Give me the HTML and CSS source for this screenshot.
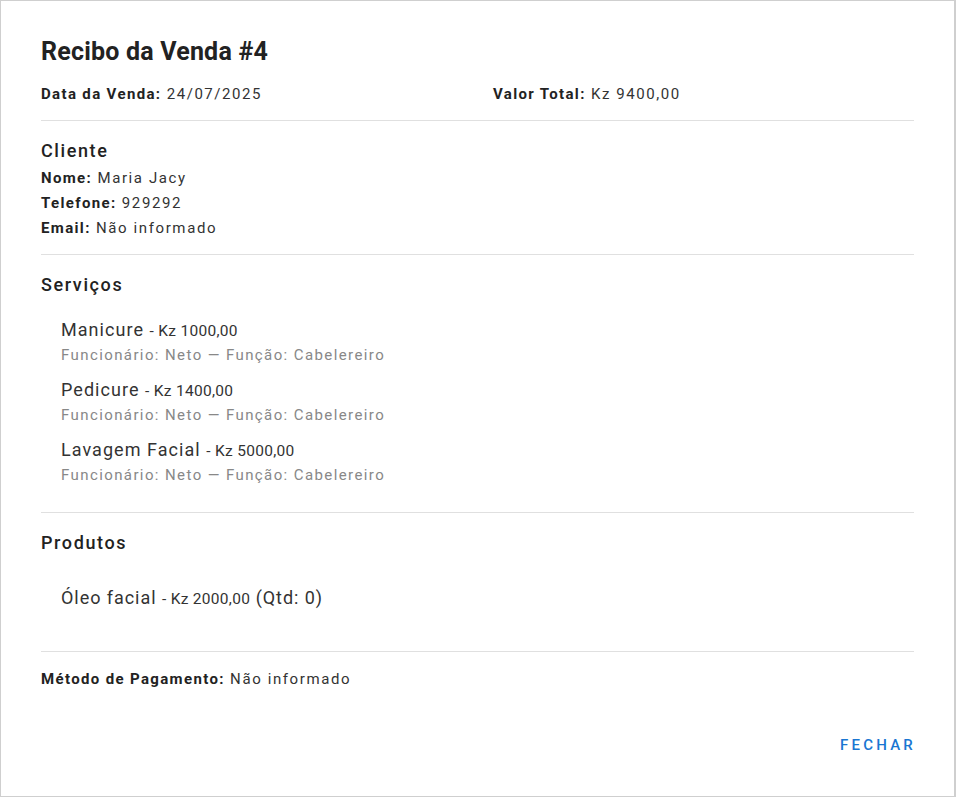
FILE: index.html
```html
<!DOCTYPE html>
<html lang="pt">
<head>
<meta charset="utf-8">
<title>Recibo da Venda #4</title>
<link rel="stylesheet" href="styles.css">
</head>
<body>
<div class="dialog">
  <h2 class="title">Recibo da Venda #4</h2>
  <div class="content">
    <div class="grid">
      <p class="line"><b>Data da Venda:</b> 24/07/2025</p>
      <p class="line"><b>Valor Total:</b> Kz 9400,00</p>
    </div>
    <hr class="divider">
    <h3 class="section section-client">Cliente</h3>
    <p class="line"><b>Nome:</b> Maria Jacy</p>
    <p class="line"><b>Telefone:</b> 929292</p>
    <p class="line"><b>Email:</b> Não informado</p>
    <hr class="divider">
    <h3 class="section">Serviços</h3>
    <ul class="list list-services">
      <li class="item">
        <span class="primary">Manicure <small class="price">- Kz 1000,00</small></span>
        <span class="secondary">Funcionário: Neto — Função: Cabelereiro</span>
      </li>
      <li class="item">
        <span class="primary">Pedicure <small class="price">- Kz 1400,00</small></span>
        <span class="secondary">Funcionário: Neto — Função: Cabelereiro</span>
      </li>
      <li class="item">
        <span class="primary">Lavagem Facial <small class="price">- Kz 5000,00</small></span>
        <span class="secondary">Funcionário: Neto — Função: Cabelereiro</span>
      </li>
    </ul>
    <hr class="divider">
    <h3 class="section">Produtos</h3>
    <ul class="list list-products">
      <li class="item item-product">
        <span class="primary">Óleo facial <small class="price">- Kz 2000,00</small> (Qtd: 0)</span>
      </li>
    </ul>
    <hr class="divider">
    <p class="line"><b>Método de Pagamento:</b> Não informado</p>
  </div>
  <div class="actions">
    <button class="btn" type="button">Fechar</button>
  </div>
</div>
</body>
</html>
```
FILE: styles.css
```css
html, body {
  margin: 0;
  padding: 0;
  background: #fff;
}
body {
  font-family: Roboto, "Liberation Sans", Arial, sans-serif;
  color: rgba(0, 0, 0, 0.87);
}
.dialog {
  box-sizing: border-box;
  width: 956px;
  height: 797px;
  border: 1px solid #cfcfcf;
  border-right-width: 2px;
  padding: 0 40px;
  display: flex;
  flex-direction: column;
}
.title {
  margin: 0;
  padding: 33px 0 0;
  font-size: 25px;
  font-weight: 700;
  line-height: 36px;
  letter-spacing: 0.2px;
  color: #222;
}
.content {
  padding-top: 12px;
}
.grid {
  display: grid;
  grid-template-columns: 452px 1fr;
}
.line {
  margin: 0;
  font-size: 15px;
  line-height: 25px;
  letter-spacing: 1.6px;
  color: #333;
}
.grid .line {
  letter-spacing: 1.55px;
}
.line b {
  font-weight: 700;
  letter-spacing: 1.35px;
  color: #222;
}
.divider {
  margin: 13px 0 15px;
  border: 0;
  border-top: 1px solid #e0e0e0;
  height: 0;
}
.section {
  margin: 0;
  font-size: 18px;
  font-weight: 500;
  line-height: 29px;
  letter-spacing: 1.6px;
  color: #222;
}
.section-client {
  margin: 1px 0;
}
.list {
  list-style: none;
  margin: 0;
}
.list-services {
  padding: 12px 0 8px;
}
.list-products {
  padding: 22px 0 0;
}
.item {
  padding: 6px 20px 0;
  height: 60px;
  box-sizing: border-box;
  display: flex;
  flex-direction: column;
}
.item-product {
  height: 59px;
}
.item .primary {
  font-size: 18px;
  line-height: 26px;
  letter-spacing: 1.05px;
  color: #333;
}
.item-product .primary {
  letter-spacing: 0.95px;
}
.item .secondary {
  font-size: 15px;
  line-height: 22px;
  letter-spacing: 1.4px;
  color: #888;
}
.price {
  font-size: 15.5px;
  letter-spacing: 0.3px;
  color: #333;
}
.actions {
  margin-top: auto;
  display: flex;
  justify-content: flex-end;
  padding-bottom: 33px;
}
.btn {
  font-family: Roboto, "Liberation Sans", Arial, sans-serif;
  font-size: 15px;
  font-weight: 500;
  letter-spacing: 3.2px;
  text-transform: uppercase;
  color: #1976d2;
  background: none;
  border: 0;
  padding: 6px 0;
  margin-right: -2px;
  line-height: 24px;
  cursor: pointer;
}
```
